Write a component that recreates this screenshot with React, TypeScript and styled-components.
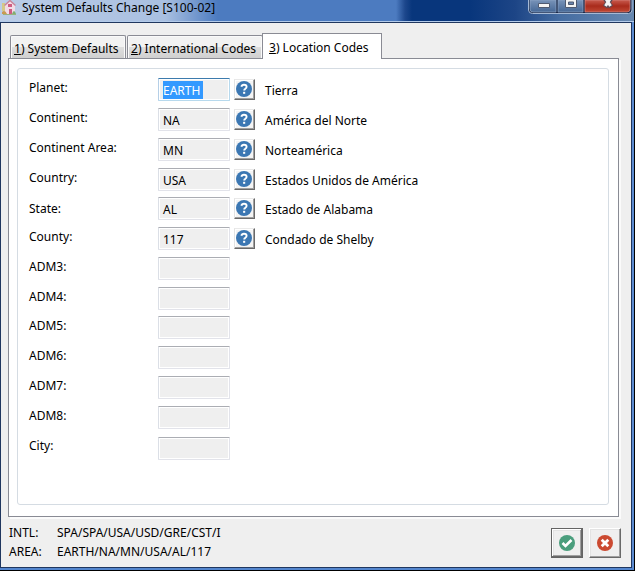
import React from "react";
import styled, { createGlobalStyle, css } from "styled-components";

const Global = createGlobalStyle`
  * { box-sizing: border-box; }
  body { margin: 0; background: #efefef; overflow: hidden; }
`;

const Window = styled.div`
  width: 635px;
  height: 571px;
  display: flex;
  flex-direction: column;
  background: #000;
  color: #000;
  font: 12px/18px "Noto Sans", "Open Sans", sans-serif;
  overflow: hidden;
`;

const TitleBar = styled.header`
  width: 634px;
  height: 22px;
  flex: none;
  display: flex;
  align-items: flex-start;
  border-bottom: 1px solid #b3cbea;
  background:
    linear-gradient(90deg, rgba(255, 255, 255, 0.62) 0, rgba(255, 255, 255, 0.52) 165px, rgba(255, 255, 255, 0) 218px),
    linear-gradient(90deg, #4c7bc0 0, #4c7bc0 396px, #1d478c 405px, #08367c 412px, #08367c 470px, #1d4586 515px, #456da2 560px, #6788b0 634px);
`;

const AppIcon = styled.svg`
  width: 16px;
  height: 16px;
  margin-left: 1px;
  flex: none;
`;

const Stretch = styled.span<{ $spacing?: number }>`
  white-space: pre;
  letter-spacing: ${({ $spacing = 0 }) => $spacing}px;
`;

const Title = styled.h1`
  margin: -1px 0 0 5px;
  font-size: 12px;
  font-weight: 400;
  line-height: 18px;
`;

const Controls = styled.svg`
  width: 105px;
  height: 15px;
  margin-left: auto;
  margin-right: 1px;
`;

const Frame = styled.div`
  width: 634px;
  height: 548px;
  flex: none;
  border-right: 2px solid #5c8bd0;
  border-bottom: 2px solid #5486ce;
`;

const Client = styled.main`
  height: 546px;
  border: 1px solid #20375f;
  background: #efefef;
  display: flex;
  flex-direction: column;
`;

const Tabs = styled.nav`
  height: 35px;
  flex: none;
  padding: 9px 0 0 9px;
  display: flex;
  align-items: flex-end;
  z-index: 1;
`;

const Tab = styled.button<{ $width: number; $active?: boolean }>`
  width: ${({ $width }) => $width}px;
  height: 23px;
  flex: none;
  padding: 4px 0 0 3px;
  border: 1px solid #8a8b94;
  border-bottom: 0;
  border-radius: 2px 2px 0 0;
  background: linear-gradient(#f2f2f2 0 48%, #dedede 50%, #d0d0d0);
  box-shadow: inset 1px 1px #fafafa, inset -1px 0 #fafafa;
  text-align: left;
  font: inherit;
  line-height: 18px;
  color: #000;
  & + & { margin-left: 1px; }
  ${({ $active }) => $active && css`
    && { margin: 0 0 -1px -1px; }
    height: 26px;
    padding: 4px 0 1px 6px;
    border-radius: 0;
    background: #fff;
    box-shadow: none;
  `}
`;

const Key = styled.u`
  text-underline-offset: 1px;
  text-decoration-thickness: 1px;
`;

const Panel = styled.section`
  width: 611px;
  height: 459px;
  margin-left: 7px;
  flex: none;
  padding: 9px 9px 11px 8px;
  border: 1px solid #898b94;
  background: #fff;
  box-shadow: 2px 2px #fbfbfb;
`;

const Group = styled.div`
  width: 592px;
  height: 437px;
  padding: 9px 0 0 11px;
  border: 1px solid #d5dce3;
  border-radius: 3px;
`;

const Row = styled.div<{ $height: number }>`
  height: ${({ $height }) => $height}px;
  display: flex;
  align-items: flex-start;
`;

const Label = styled.label<{ $top: number }>`
  width: 129px;
  flex: none;
  padding-top: ${({ $top }) => $top}px;
`;

const Field = styled.div<{ $focused?: boolean }>`
  width: 72px;
  height: 23px;
  flex: none;
  padding: 2px 0 0 4px;
  border: 1px solid;
  border-color: ${({ $focused }) => ($focused ? "#3d7bad #b7d9ed #b7d9ed #b5cfe7" : "#abadb3 #e2e3ea #e2e3ea #dbdfe6")};
  border-radius: 1px;
  background: #efefef;
  box-shadow: inset 0 0 0 1px #fff;
  line-height: 19px;
`;

const Selection = styled.span`
  display: block;
  width: 40px;
  height: 18px;
  line-height: 19px;
  background: #3399ff;
  color: #fff;
`;

const HelpButton = styled.button`
  width: 21px;
  height: 21px;
  flex: none;
  margin: 1px 0 0 4px;
  padding: 0;
  display: flex;
  border: 1px solid;
  border-color: #e9e9e9 #696969 #696969 #e3e3e3;
  background: #f4f4f4;
  box-shadow: inset -1px -1px #a0a0a0, inset 1px 1px #fff;
`;

const Value = styled.output`
  padding: 4px 0 0 10px;
`;

const Footer = styled.footer`
  flex: 1;
  display: flex;
  padding: 7px 10px 0 8px;
`;

const Summary = styled.dl`
  margin: 0;
  display: grid;
  grid-template-columns: 48px auto;
  grid-auto-rows: 19px;
  dt, dd { margin: 0; }
`;

const Actions = styled.div`
  margin: 4px 0 0 auto;
  display: flex;
  gap: 6px;
`;

const ActionButton = styled.button<{ $primary?: boolean }>`
  width: 32px;
  height: 30px;
  padding: 0;
  display: grid;
  place-items: center;
  background: #efefef;
  border: 1px solid;
  border-color: ${({ $primary }) => ($primary ? "#646464" : "#fff #696969 #696969 #fff")};
  box-shadow: ${({ $primary }) =>
    $primary
      ? "inset -1px -1px #696969, inset 1px 1px #fff, inset -2px -2px #a0a0a0, inset 2px 2px #e3e3e3"
      : "inset -1px -1px #a0a0a0, inset 1px 1px #e3e3e3"};
`;

const Round = styled.svg`
  width: 16px;
  height: 16px;
`;

const HelpIcon = () => (
  <svg width="19" height="19" viewBox="0 0 19 19">
    <circle cx="9" cy="9" r="8" fill="#3b77b3" />
    <path d="M6.4 6.7Q6.8 4.7 9 4.7Q11.6 4.7 11.6 6.8Q11.6 8 10.3 8.8Q9.2 9.4 9.2 10.5" fill="none" stroke="#fff" strokeWidth="1.9" />
    <path d="M8.1 11.8h2.1v2H8.1z" fill="#fff" />
  </svg>
);

type Entry = {
  label: string;
  code?: string;
  text?: string;
  height: number;
  top: number;
  ls?: number;
  cs?: number;
  ts?: number;
};

const entries: Entry[] = [
  { label: "Planet:", code: "EARTH", text: "Tierra", height: 30, top: 1 },
  { label: "Continent:", code: "NA", text: "América del Norte", height: 30, top: 1 },
  { label: "Continent Area:", code: "MN", text: "Norteamérica", height: 30, top: 1 },
  { label: "Country:", code: "USA", text: "Estados Unidos de América", height: 29, top: 1 },
  { label: "State:", code: "AL", text: "Estado de Alabama", height: 30, top: 3 },
  { label: "County:", code: "117", text: "Condado de Shelby", height: 30, top: 1 },
  { label: "ADM3:", height: 30, top: 1 },
  { label: "ADM4:", height: 29, top: 1 },
  { label: "ADM5:", height: 30, top: 1 },
  { label: "ADM6:", height: 30, top: 1 },
  { label: "ADM7:", height: 30, top: 1 },
  { label: "ADM8:", height: 31, top: 1 },
  { label: "City:", height: 23, top: -1 },
];

export default function App() {
  return (
    <>
      <Global />
      <Window>
        <TitleBar>
          <AppIcon viewBox="0 0 16 16">
            <path d="M1 3h3v8H1z" fill="#d5c986" />
            <path d="M4 5 9 0l5 5v9H4z" fill="#f2dce6" />
            <path d="m3.5 5.5 5.5-5 5.5 5" fill="none" stroke="#c78399" strokeWidth="1.4" />
            <path d="M7 4h4v3H7zM8 9h3v5H8z" fill="#cf5d83" />
            <path d="M1 12q3-3 5 2H1z" fill="#cb9a51" />
            <path d="M11 14q2-6 4 0z" fill="#7fae72" />
            <path d="M2 14.5h13" stroke="#9bb080" />
          </AppIcon>
          <Title><Stretch>System Defaults Change [S100-02]</Stretch></Title>
          <Controls viewBox="0 0 105 15">
            <defs>
              <linearGradient id="red" x2="0" y2="1"><stop stopColor="#c85b4e" /><stop offset=".5" stopColor="#a92b1c" /><stop offset="1" stopColor="#bf4834" /></linearGradient>
              <linearGradient id="blue" x2="0" y2="1"><stop stopColor="#7893b8" /><stop offset="1" stopColor="#466896" /></linearGradient>
            </defs>
            <path d="M.5 0v10q0 3.500 4 3.500h96q3.500 0 3.500-3.500V0" fill="#1b2b4c" stroke="#a5b9d5" />
            <path d="M2 0h26v12H5q-3 0-3-3zM30 0h25v12H30z" fill="url(#blue)" stroke="#91a8c7" strokeWidth=".7" />
            <path d="M57 0h45v9q0 3-3 3H57z" fill="url(#red)" stroke="#d58b84" strokeWidth=".7" />
            <path d="M10.500 3.500h11v4h-11z" fill="#f4f4f4" stroke="#4f5a70" />
            <path d="M37.500-2h11v9.500h-11z" fill="#f4f4f4" stroke="#4f5a70" />
            <path d="M40.500 2h5v2.500h-5z" fill="#6884ae" stroke="#4f5a70" />
            <path d="m77-2 6 9M83-2l-6 9" stroke="#5d4c57" strokeWidth="5" />
            <path d="m77.500-2 5 8M82.500-2l-5 8" stroke="#f4f4f4" strokeWidth="3" />
          </Controls>
        </TitleBar>
        <Frame>
          <Client>
            <Tabs>
              <Tab $width={116}><Stretch><Key>1</Key>) System Defaults</Stretch></Tab>
              <Tab $width={136}><Stretch><Key>2</Key>) International Codes</Stretch></Tab>
              <Tab $width={120} $active><Stretch><Key>3</Key>) Location Codes</Stretch></Tab>
            </Tabs>
            <Panel>
              <Group>
                {entries.map((e, i) => (
                  <Row key={e.label} $height={e.height}>
                    <Label $top={e.top}><Stretch $spacing={e.ls}>{e.label}</Stretch></Label>
                    <Field $focused={i === 0}>
                      {i === 0 ? <Selection><Stretch $spacing={e.cs}>{e.code}</Stretch></Selection> : <Stretch $spacing={e.cs}>{e.code}</Stretch>}
                    </Field>
                    {e.text && <HelpButton aria-label="Help"><HelpIcon /></HelpButton>}
                    {e.text && <Value><Stretch $spacing={e.ts}>{e.text}</Stretch></Value>}
                  </Row>
                ))}
              </Group>
            </Panel>
            <Footer>
              <Summary>
                <dt><Stretch>INTL:</Stretch></dt><dd><Stretch>SPA/SPA/USA/USD/GRE/CST/I</Stretch></dd>
                <dt><Stretch>AREA:</Stretch></dt><dd><Stretch>EARTH/NA/MN/USA/AL/117</Stretch></dd>
              </Summary>
              <Actions>
                <ActionButton $primary aria-label="Accept">
                  <Round viewBox="0 0 16 16"><circle cx="8" cy="8" r="8" fill="#4a9e7d" /><path d="m3.500 8 3 3 6-6" fill="none" stroke="#fff" strokeWidth="2.600" /></Round>
                </ActionButton>
                <ActionButton aria-label="Cancel">
                  <Round viewBox="0 0 16 16"><circle cx="8" cy="8" r="8" fill="#cb4a31" /><path d="m4.700 4.700 6.600 6.600m0-6.600-6.600 6.600" stroke="#fff" strokeWidth="2.800" /></Round>
                </ActionButton>
              </Actions>
            </Footer>
          </Client>
        </Frame>
      </Window>
    </>
  );
}
